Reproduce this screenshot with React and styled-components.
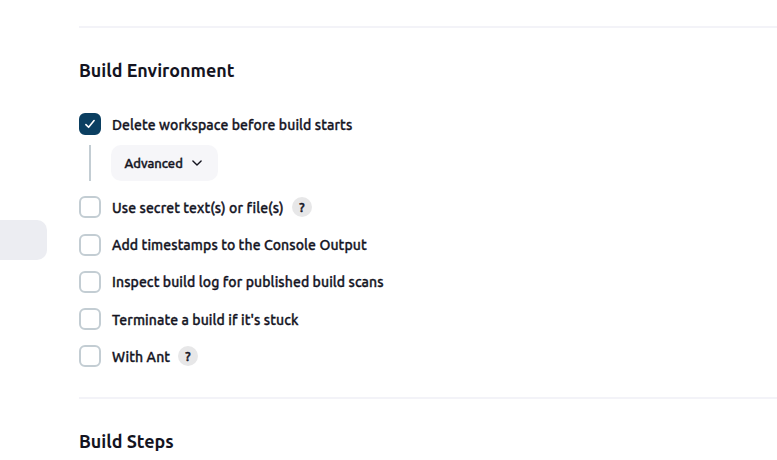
import React from "react";
import styled, { createGlobalStyle } from "styled-components";

const GlobalStyle = createGlobalStyle`
  *, *::before, *::after { box-sizing: border-box; }
  body {
    margin: 0;
    background: #fff;
    color: #14141f;
    font-family: Ubuntu, "Noto Sans", "Open Sans", sans-serif;
    overflow: hidden;
  }
`;

const Page = styled.div`
  display: flex;
  width: 100%;
  height: 460px;
  overflow: hidden;
`;

const Sidebar = styled.aside`
  flex: 0 0 79px;
  padding-top: 220px;
`;

const ActiveTask = styled.div`
  width: 47px;
  height: 40px;
  border-radius: 0 10px 10px 0;
  background: #ecedf2;
`;

const Main = styled.main`
  flex: 1;
  min-width: 0;
  padding-top: 26px;
`;

const Section = styled.section`
  height: 371px;
  border-top: 2px solid #f3f3f8;
  padding-top: 30px;
`;

const Heading = styled.h2`
  margin: 0;
  height: 26px;
  line-height: 24px;
  font-size: 17.9px;
  font-weight: 700;
  white-space: nowrap;
`;

const Options = styled.div`
  display: flex;
  flex-direction: column;
  gap: 15.25px;
  padding-top: 29px;
`;

const Group = styled.div`
  display: flex;
  flex-direction: column;
  gap: 10px;
  height: 68.2px;
`;

const Option = styled.label`
  display: flex;
  align-items: center;
  height: 22px;
`;

const Box = styled.span`
  display: grid;
  place-items: center;
  flex: none;
  width: 22px;
  height: 22px;
  margin-right: 11px;
  border-radius: 6px;
  border: 2px solid ${(p) => (p.$checked ? "#0b3f61" : "#c3cdd3")};
  background: ${(p) => (p.$checked ? "#0b3f61" : "#fff")};
`;

const Label = styled.span`
  display: block;
  flex: none;
  width: ${(p) => p.$width}px;
  padding-top: 1px;
  font-size: 14px;
  font-weight: 500;
  line-height: 22px;
  letter-spacing: 0.095px;
  -webkit-text-stroke: 0.35px currentColor;
  white-space: nowrap;
`;

const Help = styled.span`
  display: grid;
  place-items: center;
  flex: none;
  width: 20px;
  height: 20px;
  margin-left: 8px;
  border-radius: 50%;
  background: #e7e7e8;
  font-size: 13px;
  line-height: 20px;
  font-weight: 500;
  -webkit-text-stroke: 0.5px currentColor;
`;

const Nested = styled.div`
  display: flex;
  flex: none;
  height: 36px;
  margin-left: 10px;
  padding-left: 20px;
  border-left: 2px solid #c3cdd3;
`;

const AdvancedButton = styled.button`
  display: flex;
  align-items: center;
  justify-content: space-between;
  width: 107px;
  height: 36px;
  padding: 0 15px 0 13.5px;
  border: 0;
  border-radius: 10px;
  background: #f6f6f9;
  color: inherit;
  font-family: inherit;
  font-size: 13px;
  font-weight: 500;
  -webkit-text-stroke: 0.4px currentColor;
`;

const Check = () => (
  <svg width="18" height="18" viewBox="0 0 18 18" fill="none">
    <path d="M4.9 9.6 L7.6 12.3 L13.1 5.6" stroke="#fff" strokeWidth="1.6" strokeLinecap="round" strokeLinejoin="round" />
  </svg>
);

const Chevron = () => (
  <svg width="12" height="12" viewBox="0 0 12 12" fill="none">
    <path d="M1.9 3.9 L6 8 L10.1 3.9" stroke="#14141f" strokeWidth="1.4" strokeLinecap="round" strokeLinejoin="round" />
  </svg>
);

const options = [
  { text: "Use secret text(s) or file(s)", width: 172, help: true },
  { text: "Add timestamps to the Console Output", width: 254 },
  { text: "Inspect build log for published build scans", width: 272 },
  { text: "Terminate a build if it's stuck", width: 187 },
  { text: "With Ant", width: 58, help: true },
];

function OptionRow({ text, width, help, checked }) {
  return (
    <Option>
      <Box $checked={checked}>{checked && <Check />}</Box>
      <Label $width={width}>{text}</Label>
      {help && <Help>?</Help>}
    </Option>
  );
}

export default function App() {
  return (
    <Page>
      <GlobalStyle />
      <Sidebar>
        <ActiveTask />
      </Sidebar>
      <Main>
        <Section>
          <Heading>Build Environment</Heading>
          <Options>
            <Group>
              <OptionRow text="Delete workspace before build starts" width={241} checked />
              <Nested>
                <AdvancedButton type="button">
                  Advanced
                  <Chevron />
                </AdvancedButton>
              </Nested>
            </Group>
            {options.map((o) => (
              <OptionRow key={o.text} {...o} />
            ))}
          </Options>
        </Section>
        <Section>
          <Heading>Build Steps</Heading>
        </Section>
      </Main>
    </Page>
  );
}
